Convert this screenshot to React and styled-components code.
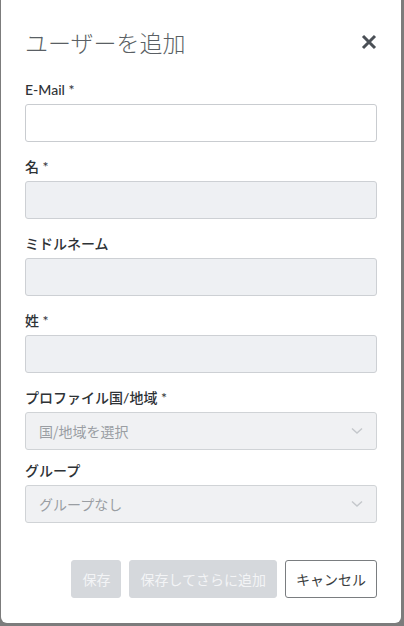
import React from 'react';
import styled, { createGlobalStyle } from 'styled-components';

const GlobalStyle = createGlobalStyle`
    html, body {
        margin: 0;
        padding: 0;
        background: #7c7c7c;
    }
    body {
        font-family: Lato, "Noto Sans CJK JP", sans-serif;
    }
`;

const Backdrop = styled.div`
    display: flex;
    width: 404px;
    height: 626px;
    padding-left: 1px;
    box-sizing: border-box;
    overflow: hidden;
`;

const Modal = styled.div`
    display: flex;
    flex-direction: column;
    width: 400px;
    height: 623px;
    box-sizing: border-box;
    padding: 28px 24px 25px;
    background: #fff;
    border-radius: 0 0 6px 6px;
`;

const Header = styled.div`
    display: flex;
    align-items: center;
    justify-content: space-between;
    height: 28px;
    margin-bottom: 24px;
`;

const Title = styled.h2`
    margin: 0;
    font-family: "Noto Sans CJK JP", sans-serif;
    font-size: 23px;
    font-weight: 300;
    line-height: 28px;
    color: #5a5f64;
`;

const Close = styled.button`
    display: flex;
    align-items: center;
    justify-content: center;
    width: 20px;
    height: 20px;
    margin-right: -2px;
    padding: 0;
    border: none;
    background: transparent;
`;

const Field = styled.div`
    display: flex;
    flex-direction: column;
    gap: 4px;
    margin-bottom: ${p => p.$gap}px;
`;

const Label = styled.label`
    font-family: Lato, "Noto Sans CJK JP", sans-serif;
    font-size: 14px;
    font-weight: 500;
    line-height: 20px;
    color: #2e3236;
`;

const Input = styled.input`
    box-sizing: border-box;
    height: 38px;
    width: 100%;
    border: 1px solid ${p => (p.disabled ? '#cdd0d4' : '#c9ccd0')};
    border-radius: 3px;
    background: ${p => (p.disabled ? '#eef0f3' : '#fff')};
    padding: 0 12px;
    font-size: 14px;
`;

const Select = styled.div`
    display: flex;
    align-items: center;
    justify-content: space-between;
    box-sizing: border-box;
    height: 38px;
    padding: 0 13px 0 13px;
    border: 1px solid #d0d3d6;
    border-radius: 3px;
    background: #f0f1f3;
    color: #9a9ea3;
    font-family: "Noto Sans CJK JP", sans-serif;
    font-size: 14px;
`;

const Footer = styled.div`
    display: flex;
    justify-content: flex-end;
    gap: 8px;
    margin-top: auto;
`;

const Button = styled.button`
    box-sizing: border-box;
    height: 38px;
    padding: 0 10px;
    border-radius: 3px;
    font-family: "Noto Sans CJK JP", sans-serif;
    font-size: 14px;
    border: 1px solid ${p => (p.$outline ? '#7a7d80' : '#d5d8dc')};
    background: ${p => (p.$outline ? '#fff' : '#d5d8dc')};
    color: ${p => (p.$outline ? '#3a3d40' : '#f3f4f6')};
`;

const Chevron = () => (
    <svg width="12" height="8" viewBox="0 0 12 8">
        <path d="M1 1.5 L6 6 L11 1.5" fill="none" stroke="#c4c7cb" strokeWidth="1.4" />
    </svg>
);

const fields = [
    { label: 'E-Mail *', disabled: false },
    { label: '名 *', disabled: true },
    { label: 'ミドルネーム', disabled: true },
    { label: '姓 *', disabled: true },
];

const selects = [
    { label: 'プロファイル国/地域 *', placeholder: '国/地域を選択' },
    { label: 'グループ', placeholder: 'グループなし' },
];

const App = () => {
    return (
        <Backdrop>
            <GlobalStyle />
            <Modal>
                <Header>
                    <Title>ユーザーを追加</Title>
                    <Close>
                        <svg width="16" height="16" viewBox="0 0 16 16">
                            <path d="M2 2 L14 14 M14 2 L2 14" stroke="#4b5056" strokeWidth="3" />
                        </svg>
                    </Close>
                </Header>
                {fields.map(f => (
                    <Field key={f.label} $gap={15}>
                        <Label>{f.label}</Label>
                        <Input disabled={f.disabled} />
                    </Field>
                ))}
                {selects.map(s => (
                    <Field key={s.label} $gap={11}>
                        <Label>{s.label}</Label>
                        <Select>
                            <span>{s.placeholder}</span>
                            <Chevron />
                        </Select>
                    </Field>
                ))}
                <Footer>
                    <Button disabled>保存</Button>
                    <Button disabled>保存してさらに追加</Button>
                    <Button $outline>キャンセル</Button>
                </Footer>
            </Modal>
        </Backdrop>
    );
};

export default App;
